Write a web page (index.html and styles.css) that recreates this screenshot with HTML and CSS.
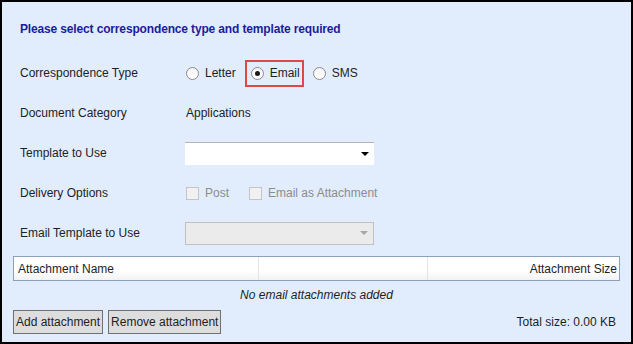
FILE: index.html
```html
<!DOCTYPE html>
<html lang="en">

<head>
    <meta charset="UTF-8">
    <meta name="viewport" content="width=device-width, initial-scale=1.0">
    <title>Correspondence</title>
    <link rel="stylesheet" href="styles.css">
</head>

<body>
    <div class="panel">
        <h1 class="title">Please select correspondence type and template required</h1>

        <div class="form">
            <div class="label">Correspondence Type</div>
            <div class="value options">
                <span class="opt"><span class="radio"></span>Letter</span>
                <span class="opt picked"><span class="radio on"></span>Email</span>
                <span class="opt"><span class="radio"></span>SMS</span>
            </div>

            <div class="label">Document Category</div>
            <div class="value">Applications</div>

            <div class="label">Template to Use</div>
            <div class="value">
                <div class="combo"><span class="arrow"></span></div>
            </div>

            <div class="label">Delivery Options</div>
            <div class="value options off">
                <span class="opt"><span class="check"></span>Post</span>
                <span class="opt"><span class="check"></span>Email as Attachment</span>
            </div>

            <div class="label">Email Template to Use</div>
            <div class="value">
                <div class="combo disabled"><span class="arrow"></span></div>
            </div>
        </div>

        <div class="grid-head">
            <div class="col col-name">Attachment Name</div>
            <div class="col col-blank"></div>
            <div class="col col-size">Attachment Size</div>
        </div>
        <div class="empty">No email attachments added</div>

        <div class="footer">
            <div class="buttons">
                <button type="button">Add attachment</button>
                <button type="button">Remove attachment</button>
            </div>
            <div class="total">Total size: 0.00 KB</div>
        </div>
    </div>
</body>

</html>
```

FILE: styles.css
```css
body {
    margin: 0;
    font-family: "Liberation Sans", Arial, sans-serif;
    font-size: 12px;
    color: #1e1e1e;
}

.panel {
    width: 633px;
    height: 344px;
    box-sizing: border-box;
    border: 2px solid #000;
    background: #e1edfd;
    padding: 19px 11px 0 11px;
    display: flex;
    flex-direction: column;
}

.title {
    margin: 0 0 16px 7px;
    font-size: 12px;
    line-height: 16px;
    font-weight: bold;
    letter-spacing: -0.15px;
    color: #1c1c9c;
}

.form {
    display: grid;
    grid-template-columns: 166px 1fr;
    grid-auto-rows: 40px;
    align-items: center;
    padding-left: 7px;
}

.options {
    display: flex;
    align-items: center;
    gap: 9px;
}

.options.off {
    gap: 20px;
}

.opt {
    display: flex;
    align-items: center;
    gap: 6px;
    height: 23px;
}

.opt.picked {
    border: 2px solid #e04848;
    padding: 0 2px 0 4px;
}

.radio {
    width: 11px;
    height: 11px;
    border: 1px solid #8c8c8c;
    border-radius: 50%;
    background: linear-gradient(#f4f4f4, #ffffff);
    display: flex;
    align-items: center;
    justify-content: center;
}

.radio.on::after {
    content: "";
    width: 5px;
    height: 5px;
    border-radius: 50%;
    background: #1a1a1a;
}

.check {
    width: 11px;
    height: 11px;
    border: 1px solid #c4c4c4;
    background: #f1f1f1;
}

.off {
    color: #8c8c8c;
}

.combo {
    width: 189px;
    height: 23px;
    margin-left: -1px;
    box-sizing: border-box;
    background: #fff;
    border-top: 1px solid #b4b4b4;
    display: flex;
    align-items: center;
    justify-content: flex-end;
    padding-right: 5px;
}

.combo .arrow {
    width: 0;
    height: 0;
    border-left: 4px solid transparent;
    border-right: 4px solid transparent;
    border-top: 4px solid #000;
}

.combo.disabled {
    background: #ebebeb;
    border: 1px solid #c2c2c2;
}

.combo.disabled .arrow {
    border-top-color: #a8a8a8;
}

.grid-head {
    margin-top: 3px;
    height: 25px;
    box-sizing: border-box;
    border: 1px solid #8aa0bd;
    background: linear-gradient(#ffffff 60%, #f2f2f2);
    display: grid;
    grid-template-columns: 245px 169px 1fr;
}

.col {
    display: flex;
    align-items: center;
    padding: 0 4px;
    border-right: 1px solid #e3e3e3;
}

.col-size {
    border-right: none;
    justify-content: flex-end;
    padding-right: 2px;
}

.empty {
    height: 29px;
    line-height: 29px;
    text-align: center;
    font-style: italic;
}

.footer {
    display: flex;
    justify-content: space-between;
    align-items: center;
}

.buttons {
    display: flex;
    gap: 5px;
}

button {
    font-family: inherit;
    font-size: 12px;
    color: #1e1e1e;
    height: 24px;
    padding: 0 2px;
    background: #dddddd;
    border: 1px solid #707070;
    border-radius: 0;
}

.total {
    padding-right: 4px;
}
```
